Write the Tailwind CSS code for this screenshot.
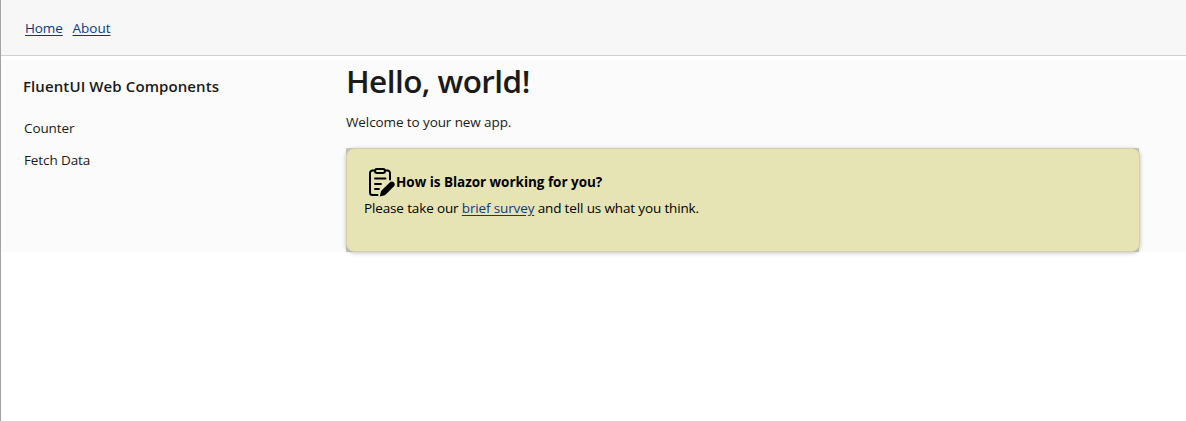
<!DOCTYPE html>
<html lang="en">
<head>
<meta charset="utf-8">
<title>Home</title>
<script src="https://cdn.jsdelivr.net/npm/@tailwindcss/browser@4"></script>
</head>
<body class="h-[421px] overflow-hidden border-l border-[#a3a3a3] bg-white font-['Open_Sans','Noto_Sans',sans-serif] text-[13.5px] leading-5 text-[#1a1a1a] whitespace-nowrap">
  <header class="flex h-14 items-center gap-[9.5px] border-b border-[#d0d0d0] bg-[#f7f7f7] pl-6 text-[#0b3a82]">
    <a class="w-[38px] tracking-[-0.1px] underline underline-offset-2">Home</a>
    <a class="underline underline-offset-2">About</a>
  </header>
  <div class="mt-1 flex h-[192px] bg-[#fbfbfb]">
    <nav class="w-[345px] pt-[15px] pl-[22px]">
      <h4 class="h-[23px] text-[15px] leading-[22px] font-semibold tracking-[0.1px]">FluentUI Web Components</h4>
      <a class="mt-5 ml-px block tracking-[-0.1px]">Counter</a>
      <a class="mt-3 ml-px block tracking-[-0.1px]">Fetch Data</a>
    </nav>
    <main class="w-[794px]">
      <h1 class="h-[44px] text-[31.5px] leading-[41px] font-semibold tracking-[-0.55px]">Hello, world!</h1>
      <p class="mt-2 h-5 tracking-[-0.1px]">Welcome to your new app.</p>
      <div class="mt-4 h-[104px] w-[793px] bg-[#cdcdcd]">
        <div class="h-full w-[794px] rounded-lg border border-[#d2d0a6] bg-[#e6e4b4] pt-[17px] pl-[17px] text-black shadow-[0_1px_4px_rgba(0,0,0,0.25)]">
          <div class="flex h-8 items-center">
            <svg class="h-8 w-8" viewBox="0 0 32 32" fill="none" stroke="#000" stroke-width="2" stroke-linecap="round" stroke-linejoin="round">
              <path d="M11 4.500H8.500A2.500 2.500 0 0 0 6 7v19.500A2.500 2.500 0 0 0 8.500 29H13.500M21 4.500h2.500A2.500 2.500 0 0 1 26 7v6.500"/>
              <rect x="11" y="3" width="10" height="4" rx="2"/>
              <path d="M11 12.500h10.500M11 18h6M11 23h4" stroke-width="1.900"/>
              <path d="M15.800 30.500l1-4.500q.3-1 1.200-1.900L26 16.300c2.700-2.200 6.200 1.200 4 4L22 28.300q-.9.900-2 1.200z" fill="#000" stroke="none"/>
            </svg>
            <strong class="font-bold tracking-[-0.03px]">How is Blazor working for you?</strong>
          </div>
          <p class="tracking-[-0.14px]">Please take our <a class="text-[#0b3a82] underline underline-offset-2">brief survey</a> and tell us what you think.</p>
        </div>
      </div>
    </main>
  </div>
</body>
</html>
